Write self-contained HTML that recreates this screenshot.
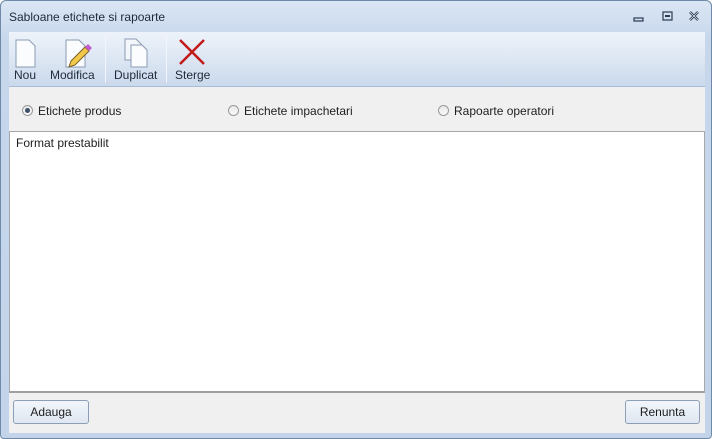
<!DOCTYPE html>
<html><head><style>
*{margin:0;padding:0;box-sizing:border-box}
body{width:712px;height:439px;overflow:hidden;font-family:"Liberation Sans",sans-serif;font-size:12px;color:#1e1e1e;background:#fff}
.win{position:absolute;left:0;top:0;width:712px;height:439px;background:linear-gradient(#dbe6f4,#c6d7ec 40px,#c3d4ea);border:1px solid #6f8aa9;border-radius:6px 6px 4px 4px}
.title{position:absolute;left:8px;top:9px;font-size:12px;color:#1e2a3a}
.tb{position:absolute;left:8px;top:31px;width:696px;height:55px;background:linear-gradient(#eef3fa,#d9e4f2 60%,#cbd9ec);border-bottom:1px solid #a8bcd6}
.sep{position:absolute;top:3px;width:1px;height:48px;background:#b8c8dc;border-right:1px solid #f2f6fb}
.lbl{position:absolute;top:36px;font-size:12px;color:#1e2a3a}
.radio{position:absolute;left:8px;top:86px;width:696px;height:44px;background:#f0f0f0}
.rb{position:absolute;top:18px;width:11px;height:11px;border-radius:50%;border:1px solid #9a9a9a;background:linear-gradient(#e8e8e8,#fafafa)}
.rb.on::after{content:"";position:absolute;left:2px;top:2px;width:5px;height:5px;border-radius:50%;background:#3d4f6a}
.rl{position:absolute;top:17px}
.list{position:absolute;left:8px;top:130px;width:696px;height:262px;background:#fff;border:1px solid #a8a8a8;border-bottom:2px solid #a0a0a0}
.bot{position:absolute;left:8px;top:392px;width:696px;height:40px;background:#f0f0f0}
.btn{position:absolute;top:7px;height:24px;border:1px solid #8d9fb6;border-radius:3px;background:linear-gradient(#f2f6fb,#dfe7f1);text-align:center;line-height:22px}
</style></head><body>
<div class="win">
<div class="title">Sabloane etichete si rapoarte</div>
<svg style="position:absolute;left:630px;top:8px" width="80" height="16">
<rect x="3" y="9" width="9" height="3" fill="none" stroke="#2b3a50" stroke-width="1.2"/>
<rect x="32" y="3" width="9" height="8" fill="none" stroke="#2b3a50" stroke-width="1.2"/><rect x="34" y="6" width="5" height="2" fill="#2b3a50"/>
<path d="M59 3l8 8M67 3l-8 8" stroke="#2b3a50" stroke-width="2.5"/><path d="M59 3l8 8M67 3l-8 8" stroke="#dfe8f4" stroke-width="0.8"/>
</svg>
<div class="tb">
<svg style="position:absolute;left:4px;top:4px" width="200" height="32">
<path d="M3 4h13l6 6v21H3z" fill="#fbfcfe" stroke="#8a9bb3"/>
<path d="M53 4h13l6 6v21H53z" fill="#fbfcfe" stroke="#8a9bb3"/>
<path d="M58 25l14-14 4 4-14 14-6 2z" fill="#f2c84b" stroke="#7a6020"/><path d="M72 11l3-3 4 4-3 3z" fill="#c35bd0"/>
<path d="M112 3h11l5 5v16h-16z" fill="#f3f6fb" stroke="#8a9bb3"/>
<path d="M118 9h11l5 5v17h-16z" fill="#fbfcfe" stroke="#8a9bb3"/>
<path d="M167 4l24 24M191 4l-24 24" stroke="#c21a1a" stroke-width="2.5"/>
</svg>
<div class="sep" style="left:96px"></div>
<div class="sep" style="left:157px"></div>
<div class="lbl" style="left:5px">Nou</div>
<div class="lbl" style="left:41px">Modifica</div>
<div class="lbl" style="left:105px">Duplicat</div>
<div class="lbl" style="left:166px">Sterge</div>
</div>
<div class="radio">
<div class="rb on" style="left:13px"></div><div class="rl" style="left:29px">Etichete produs</div>
<div class="rb" style="left:219px"></div><div class="rl" style="left:235px">Etichete impachetari</div>
<div class="rb" style="left:429px"></div><div class="rl" style="left:445px">Rapoarte operatori</div>
</div>
<div class="list"><div style="position:absolute;left:6px;top:4px">Format prestabilit</div></div>
<div class="bot">
<div class="btn" style="left:4px;width:76px">Adauga</div>
<div class="btn" style="left:616px;width:75px">Renunta</div>
</div>
</div>
</body></html>
